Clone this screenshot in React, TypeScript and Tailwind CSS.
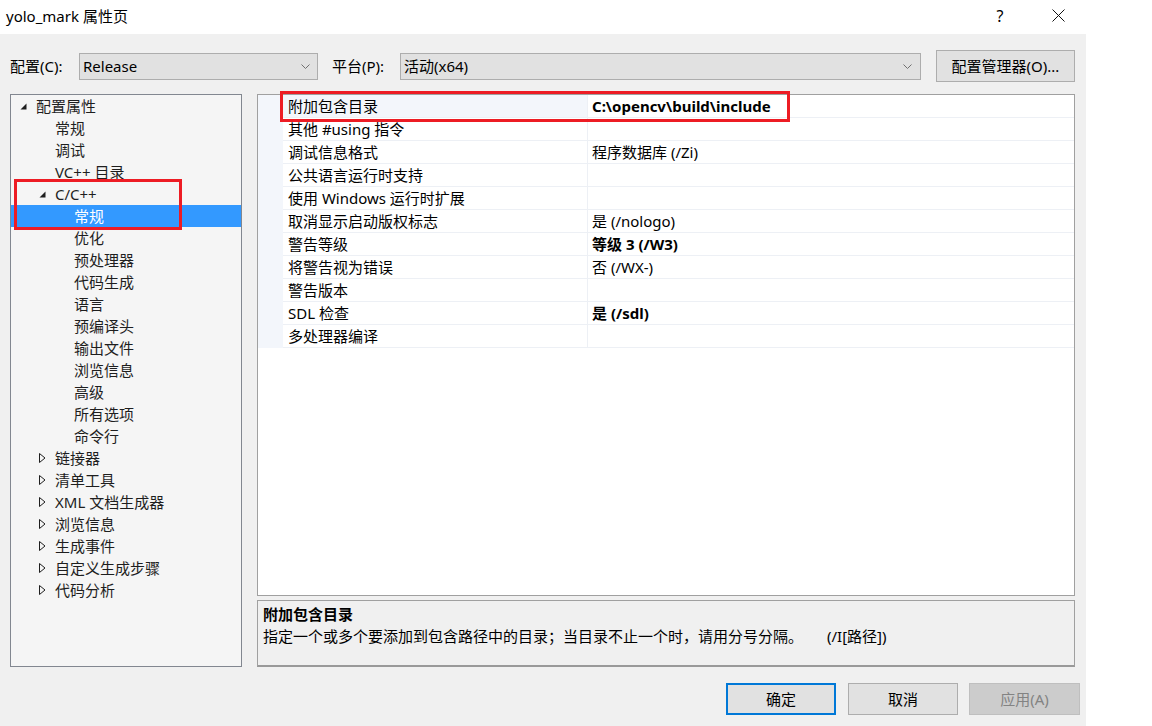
import React from "react";

type TreeItem = { label: string; level: 0 | 1 | 2; icon?: "open" | "closed"; selected?: boolean };

const tree: TreeItem[] = [
  { label: "配置属性", level: 0, icon: "open" },
  { label: "常规", level: 1 },
  { label: "调试", level: 1 },
  { label: "VC++ 目录", level: 1 },
  { label: "C/C++", level: 1, icon: "open" },
  { label: "常规", level: 2, selected: true },
  { label: "优化", level: 2 },
  { label: "预处理器", level: 2 },
  { label: "代码生成", level: 2 },
  { label: "语言", level: 2 },
  { label: "预编译头", level: 2 },
  { label: "输出文件", level: 2 },
  { label: "浏览信息", level: 2 },
  { label: "高级", level: 2 },
  { label: "所有选项", level: 2 },
  { label: "命令行", level: 2 },
  { label: "链接器", level: 1, icon: "closed" },
  { label: "清单工具", level: 1, icon: "closed" },
  { label: "XML 文档生成器", level: 1, icon: "closed" },
  { label: "浏览信息", level: 1, icon: "closed" },
  { label: "生成事件", level: 1, icon: "closed" },
  { label: "自定义生成步骤", level: 1, icon: "closed" },
  { label: "代码分析", level: 1, icon: "closed" },
];

const rows: { name: string; value: string; bold?: boolean; hl?: boolean }[] = [
  { name: "附加包含目录", value: "C:\\opencv\\build\\include", bold: true, hl: true },
  { name: "其他 #using 指令", value: "" },
  { name: "调试信息格式", value: "程序数据库 (/Zi)" },
  { name: "公共语言运行时支持", value: "" },
  { name: "使用 Windows 运行时扩展", value: "" },
  { name: "取消显示启动版权标志", value: "是 (/nologo)" },
  { name: "警告等级", value: "等级 3 (/W3)", bold: true },
  { name: "将警告视为错误", value: "否 (/WX-)" },
  { name: "警告版本", value: "" },
  { name: "SDL 检查", value: "是 (/sdl)", bold: true },
  { name: "多处理器编译", value: "" },
];

function OpenTri() {
  return (
    <svg width="7" height="7" viewBox="0 0 7 7" className="block">
      <polygon points="6.5,0.5 6.5,6.5 0.5,6.5" fill="#1e1e1e" />
    </svg>
  );
}

function ClosedTri() {
  return (
    <svg width="7" height="10" viewBox="0 0 7 10" className="block">
      <polygon points="0.5,0.5 6,5 0.5,9.5" fill="none" stroke="#1e1e1e" strokeWidth="1" />
    </svg>
  );
}

function Chevron() {
  return (
    <svg width="9" height="5" viewBox="0 0 9 5" className="block">
      <polyline points="0.5,0.5 4.5,4.5 8.5,0.5" fill="none" stroke="#707070" strokeWidth="1" />
    </svg>
  );
}

const indent: Record<string, string> = {
  "0i": "pl-[9px]",
  "1i": "pl-[28px]",
  "1n": "pl-[44px]",
  "2n": "pl-[63px]",
};

export default function App() {
  return (
    <div className="w-[1152px] h-[726px] bg-white font-['Noto_Sans','Noto_Sans_CJK_SC',sans-serif] text-[15px] text-[#000] overflow-hidden">
      <div className="w-[1086px] h-[726px] flex flex-col">
        {/* title bar */}
        <div className="h-[34px] bg-white flex items-center pl-[6px] relative">
          <span className="text-[15px] leading-[20px] -mt-[3px]">yolo_mark 属性页</span>
          <div className="ml-auto flex items-center h-full">
            <span className="w-[60px] text-center text-[16px] -mt-[3px]">?</span>
            <div className="w-[56px] flex justify-center -mt-[3px]">
              <svg width="13" height="13" viewBox="0 0 13 13">
                <path d="M0.5 0.5 L12.5 12.5 M12.5 0.5 L0.5 12.5" stroke="#111" strokeWidth="1" />
              </svg>
            </div>
          </div>
        </div>

        {/* body */}
        <div className="flex-1 bg-[#f0f0f0] flex flex-col">
          {/* config row */}
          <div className="flex items-center h-[32px] mt-[16px] pl-[10px]">
            <span className="w-[69px] leading-[20px]">配置(C):</span>
            <div className="w-[239px] h-[27px] bg-[#e1e1e1] border border-[#adadad] flex items-center pl-[3px] pr-[7px]">
              <span className="flex-1 leading-[20px]">Release</span>
              <Chevron />
            </div>
            <span className="ml-[14px] w-[68px] leading-[20px]">平台(P):</span>
            <div className="w-[521px] h-[27px] bg-[#e1e1e1] border border-[#adadad] flex items-center pl-[3px] pr-[8px]">
              <span className="flex-1 leading-[20px]">活动(x64)</span>
              <Chevron />
            </div>
            <div className="ml-[15px] w-[139px] h-[32px] bg-[#e1e1e1] border border-[#adadad] flex items-center justify-center">
              配置管理器(O)...
            </div>
          </div>

          {/* main */}
          <div className="flex mt-[12px] pl-[10px] h-[573px]">
            {/* tree */}
            <div className="w-[232px] h-full border border-[#828790] bg-[#f5f5f5] relative">
              {tree.map((t, i) => {
                const key = `${t.level}${t.icon ? "i" : "n"}`;
                return (
                  <div
                    key={i}
                    className={`h-[22px] flex items-center ${indent[key]} ${t.selected ? "bg-[#3399ff] text-white" : "text-[#1e1e1e]"}`}
                  >
                    {t.icon && (
                      <span className="w-[16px] flex items-center">
                        {t.icon === "open" ? <OpenTri /> : <ClosedTri />}
                      </span>
                    )}
                    <span className="leading-[20px] whitespace-nowrap">{t.label}</span>
                  </div>
                );
              })}
              <div className="absolute left-[3px] top-[84px] w-[168px] h-[51px] border-[3px] border-[#ed1c24]" />
            </div>

            {/* right */}
            <div className="ml-[15px] w-[818px] h-full flex flex-col">
              <div className="h-[502px] border border-[#a0a0a0] bg-white relative">
                <div className="flex">
                  <div className="w-[25px] bg-[#f3f6fb]" />
                  <div className="flex-1 flex flex-col">
                    {rows.map((r, i) => (
                      <div key={i} className="h-[23px] flex border-b border-[#edf0f5]">
                        <div className={`w-[304px] pl-[5px] flex items-center whitespace-nowrap ${r.hl ? "bg-[#f3f6fb]" : ""}`}>
                          <span className="leading-[20px]">{r.name}</span>
                        </div>
                        <div className={`flex-1 pl-[4px] border-l border-[#edf0f5] flex items-center whitespace-nowrap ${r.bold ? "font-bold" : ""}`}>
                          <span className="leading-[20px]">{r.value}</span>
                        </div>
                      </div>
                    ))}
                  </div>
                </div>
                <div className="absolute left-[22px] top-[-4px] w-[510px] h-[31px] border-[3px] border-[#ed1c24]" />
              </div>
              <div className="mt-[4px] h-[67px] border border-[#a0a0a0] border-b-2 border-b-[#999] bg-[#f0f0f0] pl-[5px] pt-[2px]">
                <div className="font-bold leading-[22px]">附加包含目录</div>
                <div className="leading-[22px] whitespace-nowrap">
                  指定一个或多个要添加到包含路径中的目录；当目录不止一个时，请用分号分隔。<span className="ml-[24px]">(/I[路径])</span>
                </div>
              </div>
            </div>
          </div>

          {/* buttons */}
          <div className="flex mt-[16px] pl-[726px]">
            <div className="w-[110px] h-[32px] border-2 border-[#0078d7] bg-[#e1e1e1] flex items-center justify-center">确定</div>
            <div className="ml-[12px] w-[110px] h-[32px] border border-[#adadad] bg-[#e1e1e1] flex items-center justify-center">取消</div>
            <div className="ml-[11px] w-[111px] h-[32px] border border-[#bfbfbf] bg-[#cccccc] text-[#838383] flex items-center justify-center">应用(A)</div>
          </div>
        </div>
      </div>
    </div>
  );
}
